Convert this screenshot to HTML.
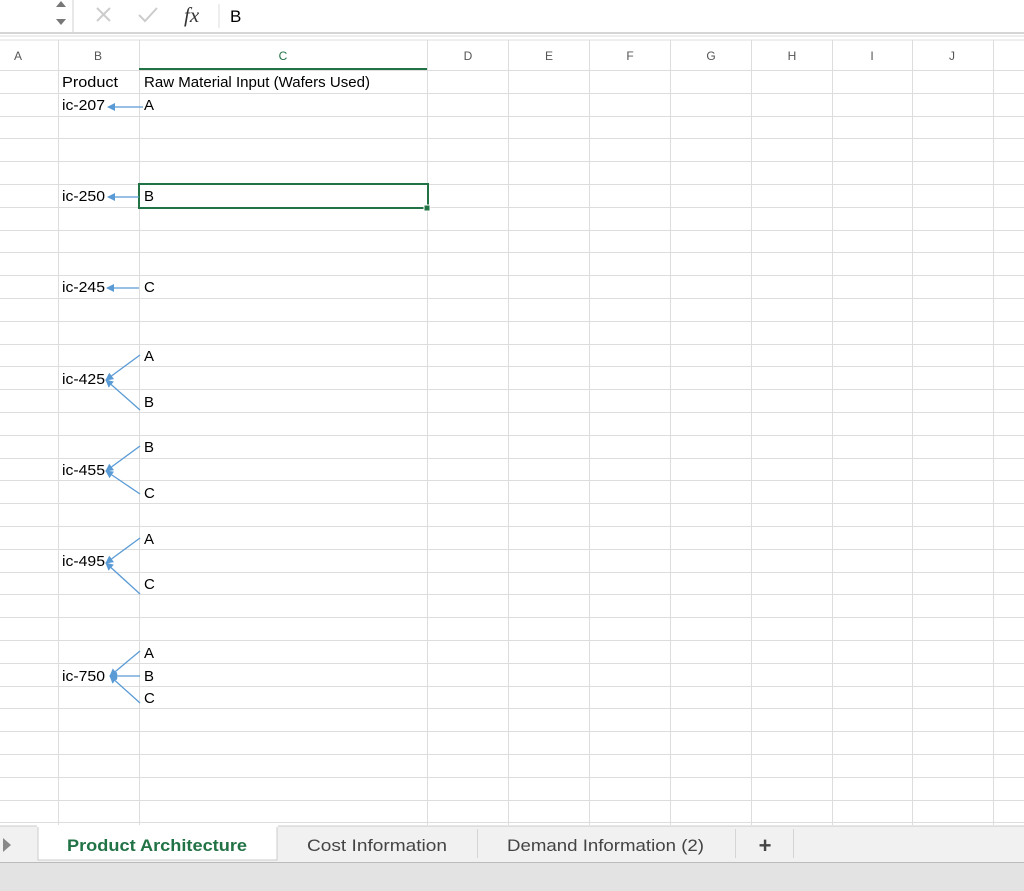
<!DOCTYPE html>
<html><head><style>
body{margin:0;width:1024px;height:891px;overflow:hidden;background:#fff;font-family:"Liberation Sans",sans-serif}
svg{position:absolute;left:0;top:0}
</style></head><body>
<svg width="1024" height="891" viewBox="0 0 1024 891" font-family="Liberation Sans, sans-serif">
<defs><marker id="ah" markerWidth="8" markerHeight="8" refX="7" refY="4" orient="auto" markerUnits="userSpaceOnUse"><path d="M0,0 L8,4 L0,8 Z" fill="#5b9bd5"/></marker></defs>
<rect x="0" y="0" width="1024" height="34" fill="#fff"/>
<path d="M56,7 L61,1 L66,7Z M56,19 L61,25 L66,19Z" fill="#777"/>
<line x1="73" y1="0" x2="73" y2="32" stroke="#d0d0d0"/>
<path d="M97,8 L110,21 M110,8 L97,21" stroke="#ccc" stroke-width="2"/>
<path d="M139,15 L145,21 L157,8" stroke="#ccc" stroke-width="2" fill="none"/>
<text x="184" y="22" font-family="Liberation Serif, serif" font-style="italic" font-size="21" fill="#333">fx</text>
<line x1="219" y1="4" x2="219" y2="28" stroke="#ddd"/>
<text x="230" y="22" font-size="17" fill="#000">B</text>
<line x1="0" y1="33" x2="1024" y2="33" stroke="#d5d5d5" stroke-width="2"/>
<rect x="0" y="35" width="1024" height="2" fill="#eee"/>
<rect x="0" y="37" width="1024" height="33" fill="#fff"/>
<g stroke="#dddddd"><line x1="0" y1="40" x2="1024" y2="40"/>
<line x1="58.5" y1="40" x2="58.5" y2="825"/><line x1="139.5" y1="40" x2="139.5" y2="825"/><line x1="427.5" y1="40" x2="427.5" y2="825"/><line x1="508.5" y1="40" x2="508.5" y2="825"/><line x1="589.5" y1="40" x2="589.5" y2="825"/><line x1="670.5" y1="40" x2="670.5" y2="825"/><line x1="751.5" y1="40" x2="751.5" y2="825"/><line x1="832.5" y1="40" x2="832.5" y2="825"/><line x1="912.5" y1="40" x2="912.5" y2="825"/><line x1="993.5" y1="40" x2="993.5" y2="825"/>
<line x1="0" y1="70.5" x2="1024" y2="70.5"/>
<line x1="0" y1="93.5" x2="1024" y2="93.5"/><line x1="0" y1="116.5" x2="1024" y2="116.5"/><line x1="0" y1="138.5" x2="1024" y2="138.5"/><line x1="0" y1="161.5" x2="1024" y2="161.5"/><line x1="0" y1="184.5" x2="1024" y2="184.5"/><line x1="0" y1="207.5" x2="1024" y2="207.5"/><line x1="0" y1="230.5" x2="1024" y2="230.5"/><line x1="0" y1="252.5" x2="1024" y2="252.5"/><line x1="0" y1="275.5" x2="1024" y2="275.5"/><line x1="0" y1="298.5" x2="1024" y2="298.5"/><line x1="0" y1="321.5" x2="1024" y2="321.5"/><line x1="0" y1="344.5" x2="1024" y2="344.5"/><line x1="0" y1="366.5" x2="1024" y2="366.5"/><line x1="0" y1="389.5" x2="1024" y2="389.5"/><line x1="0" y1="412.5" x2="1024" y2="412.5"/><line x1="0" y1="435.5" x2="1024" y2="435.5"/><line x1="0" y1="458.5" x2="1024" y2="458.5"/><line x1="0" y1="480.5" x2="1024" y2="480.5"/><line x1="0" y1="503.5" x2="1024" y2="503.5"/><line x1="0" y1="526.5" x2="1024" y2="526.5"/><line x1="0" y1="549.5" x2="1024" y2="549.5"/><line x1="0" y1="572.5" x2="1024" y2="572.5"/><line x1="0" y1="594.5" x2="1024" y2="594.5"/><line x1="0" y1="617.5" x2="1024" y2="617.5"/><line x1="0" y1="640.5" x2="1024" y2="640.5"/><line x1="0" y1="663.5" x2="1024" y2="663.5"/><line x1="0" y1="686.5" x2="1024" y2="686.5"/><line x1="0" y1="708.5" x2="1024" y2="708.5"/><line x1="0" y1="731.5" x2="1024" y2="731.5"/><line x1="0" y1="754.5" x2="1024" y2="754.5"/><line x1="0" y1="777.5" x2="1024" y2="777.5"/><line x1="0" y1="800.5" x2="1024" y2="800.5"/><line x1="0" y1="822.5" x2="1024" y2="822.5"/>
</g>
<line x1="139" y1="69" x2="427" y2="69" stroke="#217346" stroke-width="2"/>
<g font-size="12" fill="#555" text-anchor="middle">
<text x="18" y="60">A</text><text x="98" y="60">B</text><text x="283" y="60" fill="#217346">C</text><text x="468" y="60">D</text><text x="549" y="60">E</text><text x="630" y="60">F</text><text x="711" y="60">G</text><text x="792" y="60">H</text><text x="872" y="60">I</text><text x="952" y="60">J</text>
</g>
<rect x="139" y="184" width="289" height="24" fill="none" stroke="#217346" stroke-width="2"/>
<rect x="424" y="205" width="6" height="6" fill="#217346" stroke="#fff" stroke-width="1"/>
<g font-size="15" fill="#000" lengthAdjust="spacingAndGlyphs">
<text x="62" y="87" textLength="56" lengthAdjust="spacingAndGlyphs">Product</text><text x="144" y="87" textLength="226" lengthAdjust="spacingAndGlyphs">Raw Material Input (Wafers Used)</text>
<text x="62" y="110" textLength="43" lengthAdjust="spacingAndGlyphs">ic-207</text><text x="144" y="110">A</text>
<text x="62" y="201" textLength="43" lengthAdjust="spacingAndGlyphs">ic-250</text><text x="144" y="201">B</text>
<text x="62" y="292" textLength="43" lengthAdjust="spacingAndGlyphs">ic-245</text><text x="144" y="292">C</text>
<text x="144" y="361">A</text><text x="62" y="384" textLength="43" lengthAdjust="spacingAndGlyphs">ic-425</text><text x="144" y="407">B</text>
<text x="144" y="452">B</text><text x="62" y="475" textLength="43" lengthAdjust="spacingAndGlyphs">ic-455</text><text x="144" y="498">C</text>
<text x="144" y="544">A</text><text x="62" y="566" textLength="43" lengthAdjust="spacingAndGlyphs">ic-495</text><text x="144" y="589">C</text>
<text x="144" y="658">A</text><text x="62" y="681" textLength="43" lengthAdjust="spacingAndGlyphs">ic-750</text><text x="144" y="681">B</text><text x="144" y="703">C</text>
</g>
<g stroke="#5b9bd5" stroke-width="1.3" fill="none" marker-end="url(#ah)">
<line x1="143" y1="107" x2="108" y2="107"/>
<line x1="139" y1="197" x2="108" y2="197"/>
<line x1="139" y1="288" x2="107" y2="288"/>
<line x1="140" y1="355" x2="106" y2="380"/><line x1="140" y1="410" x2="106" y2="380"/>
<line x1="140" y1="446" x2="106" y2="471"/><line x1="140" y1="494" x2="106" y2="471"/>
<line x1="140" y1="538" x2="106" y2="563"/><line x1="140" y1="594" x2="106" y2="563"/>
<line x1="140" y1="651" x2="110" y2="676"/><line x1="140" y1="676" x2="110" y2="676"/><line x1="140" y1="703" x2="110" y2="676"/>
</g>
<rect x="0" y="826" width="1024" height="36" fill="#f1f1f1"/>
<line x1="0" y1="826" x2="1024" y2="826" stroke="#ccc"/>
<path d="M3,838 L11,845 L3,852Z" fill="#888"/>
<rect x="38" y="826" width="239" height="34" fill="#fff" stroke="#ccc"/>
<rect x="37" y="825" width="241" height="2" fill="#fff"/>
<g font-size="17">
<text x="67" y="851" textLength="180" lengthAdjust="spacingAndGlyphs" fill="#217346" font-weight="bold">Product Architecture</text>
<text x="307" y="851" textLength="140" lengthAdjust="spacingAndGlyphs" fill="#444">Cost Information</text>
<text x="507" y="851" textLength="197" lengthAdjust="spacingAndGlyphs" fill="#444">Demand Information (2)</text>
<text x="765" y="853" text-anchor="middle" fill="#444" font-size="22" font-weight="bold">+</text>
</g>
<g stroke="#d5d5d5"><line x1="477.5" y1="829" x2="477.5" y2="858"/><line x1="735.5" y1="829" x2="735.5" y2="858"/><line x1="793.5" y1="829" x2="793.5" y2="858"/></g>
<rect x="0" y="862" width="1024" height="29" fill="#e3e3e3"/>
<line x1="0" y1="862.5" x2="1024" y2="862.5" stroke="#bbb"/>
</svg>
</body></html>
